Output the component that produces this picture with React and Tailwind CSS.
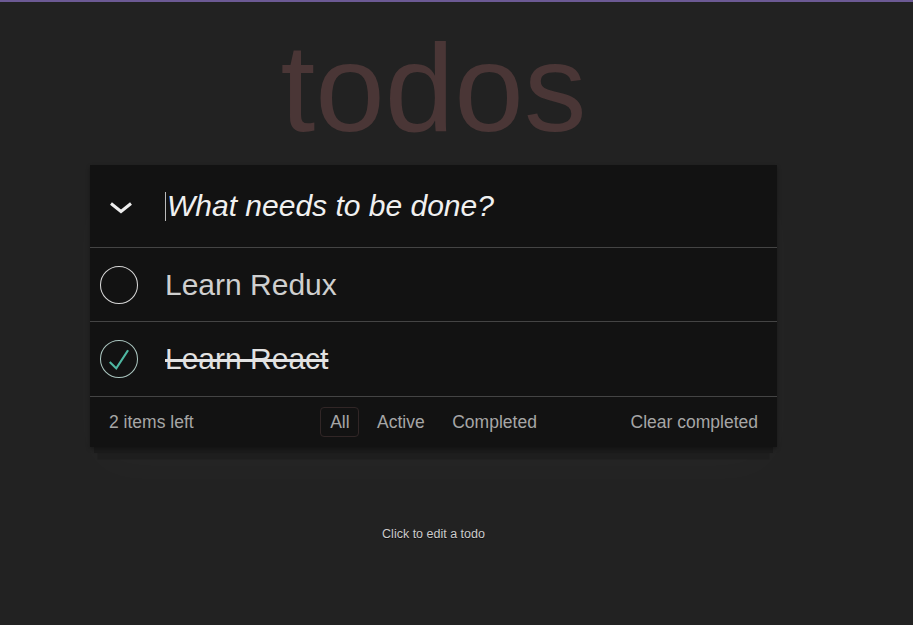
import React from "react";

const font = { fontFamily: '"Liberation Sans", Arial, Helvetica, sans-serif' };

function Circle({ checked }) {
  return (
    <svg width="40" height="40" viewBox="-4 -4 108 108">
      <circle cx="50" cy="50" r="50" fill="none" stroke={checked ? "#a9c4be" : "#d6d6d6"} strokeWidth="2.8" />
      {checked && <path fill="#4fb8a2" d="M72 25L42 71 27 56l-4 4 20 20 34-52z" />}
    </svg>
  );
}

export default function App() {
  return (
    <div className="min-h-[625px] bg-[#222222]" style={font}>
      <div className="h-[2px] bg-[#6c5a94]" />
      <div className="ml-[90px] w-[687px]">
        <h1 className="mt-[23px] h-[125px] text-center text-[125px] leading-[125px] font-normal text-[#4a3636]">
          todos
        </h1>
        <div className="mt-[15px] bg-[#121212] shadow-[0_2px_4px_0_rgba(0,0,0,0.3),0_10px_0_-4px_#1b1b1b,0_20px_0_-7.5px_#1e1e1e,0_25px_50px_0_rgba(255,255,255,0.02)]">
          <div className="flex h-[83px] items-center border-b border-[#444]">
            <div className="w-[75px] shrink-0">
              <svg className="ml-[19px] mt-[3px]" width="24" height="12" viewBox="0 0 24 12">
                <path d="M2 1.5 L12 9.5 L22 1.5" fill="none" stroke="#eeeeee" strokeWidth="3" />
              </svg>
            </div>
            <span className="h-[29px] w-px bg-[#bbbbbb]" />
            <span className="ml-[1px] text-[30px] italic leading-[42px] text-[#f0f0f0]">
              What needs to be done?
            </span>
          </div>
          <div className="flex h-[74px] items-center border-b border-[#444]">
            <div className="w-[75px] shrink-0 pl-[9px]">
              <Circle />
            </div>
            <span className="text-[30px] leading-[36px] text-[#cfcfcf]">Learn Redux</span>
          </div>
          <div className="flex h-[75px] items-center border-b border-[#444]">
            <div className="w-[75px] shrink-0 pl-[9px]">
              <Circle checked />
            </div>
            <span className="text-[30px] leading-[36px] text-[#e2e2e2] line-through">Learn React</span>
          </div>
          <div className="flex h-[50px] items-center justify-between px-[19px] text-[17.5px] text-[#a6a6a6]">
            <span className="w-[160px]">2 items left</span>
            <div className="flex items-center gap-[8px]">
              <span className="rounded-[4px] border border-[#312626] px-[8.75px] py-[3.75px] leading-[20px]">All</span>
              <span className="rounded-[4px] border border-transparent px-[8.75px] py-[3.75px] leading-[20px]">Active</span>
              <span className="rounded-[4px] border border-transparent px-[8.75px] py-[3.75px] leading-[20px]">Completed</span>
            </div>
            <span className="w-[160px] text-right">Clear completed</span>
          </div>
        </div>
        <p className="mt-[78px] text-center text-[12.5px] text-[#cccccc] [text-shadow:0_1px_0_rgba(0,0,0,0.6)]">
          Click to edit a todo
        </p>
      </div>
    </div>
  );
}
